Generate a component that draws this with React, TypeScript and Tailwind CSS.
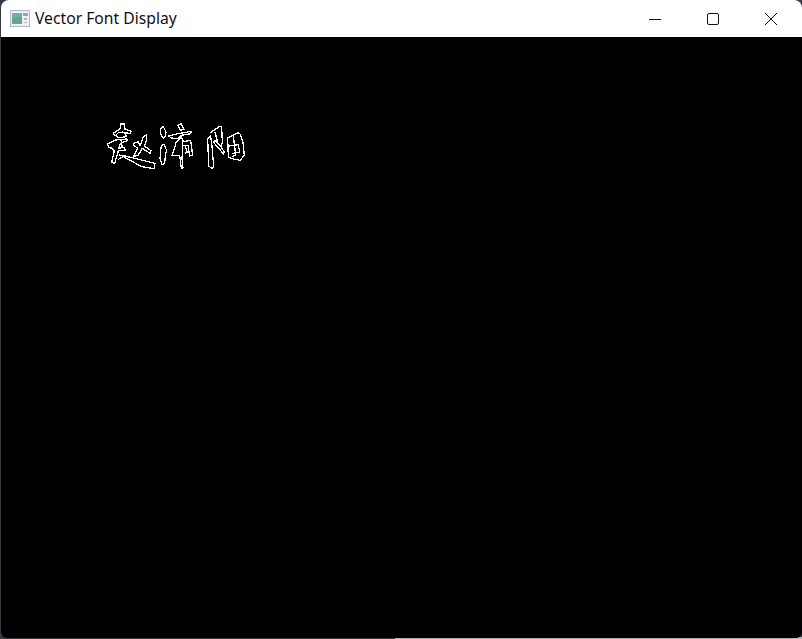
import React from "react";

const g1 = [
  "M46 26 L48 12 L58 12 L60 28 L78 34 L76 41 L60 38 L65 50 L42 53 L30 46 L25 40 L46 26",
  "M32 46 L40 38 L54 36 L60 40",
  "M8 72 L30 60 L65 57 L68 62 L46 70 L41 85 L58 82 L60 90 L40 93 L29 130 L20 128 L28 92 L22 85 L10 82 Z",
  "M48 60 L52 84",
  "M42 105 L60 108 L150 130 L148 146 L110 140 L55 110 L40 118",
  "M85 70 L100 65 L105 78 L115 50 L125 45 L125 60 L118 78 L138 92 L135 100 L112 85 L100 105 L85 111 L98 85 L85 75 Z",
];
const g2 = [
  "M8 20 L16 14 L24 30 L22 42 L16 50 L8 35 Z",
  "M10 70 L18 68 L26 85 L22 100 L20 125 L12 128 L6 110 L8 85 Z",
  "M60 10 L70 5 L78 22 L68 25 Z",
  "M32 42 L60 35 L100 28 L98 35 L70 40 L58 50 L40 48 Z",
  "M42 100 L55 60 L70 45 L75 55 L72 110 L75 138 L70 140 L65 100 Z",
  "M72 60 L98 55 L104 100 L95 102 L90 70 L75 70",
  "M82 72 L88 90 L80 95",
];
const g3 = [
  "M8 50 L16 42 L20 60 L26 135 L22 140 L11 132 Z",
  "M15 33 L45 12 L50 15 L52 60 L48 75 L30 55 L25 60 L55 95 L58 90 L48 75",
  "M30 30 L38 62",
  "M68 48 L100 32 L105 36 L114 60 L118 100 L105 115 L80 110 L70 105 Z",
  "M85 42 L92 98 L82 105",
  "M72 72 L100 68 L104 90 L80 95",
];

export default function App() {
  return (
    <div className="relative w-[802px] h-[639px] bg-[#3a3a44] overflow-hidden" style={{ fontFamily: "'Noto Sans', 'Open Sans', sans-serif" }}>
      <div className="absolute left-[395px] right-0 bottom-0 h-[2px] bg-[#b0b0b0]" />
      <div className="absolute inset-0 flex flex-col ml-[1px] mb-[1px] rounded-t-lg rounded-b-md overflow-hidden">
        <header className="h-[37px] shrink-0 bg-white flex items-center">
          <svg width="20" height="17" viewBox="0 0 20 17" className="ml-[9px] shrink-0">
            <rect x="0.5" y="0.5" width="19" height="16" fill="#eef0f2" stroke="#b4babd" />
            <rect x="2" y="3" width="10" height="11" fill="#62a890" />
            <rect x="2" y="3" width="10" height="4" fill="#7ea6bd" />
            <rect x="13" y="3" width="5" height="3" fill="#9aa5a8" />
            <rect x="14" y="8" width="3" height="2" fill="#a8c0b0" />
            <rect x="14" y="12" width="3" height="1" fill="#b4bcb8" />
          </svg>
          <span className="ml-[5px] text-[15.7px] leading-none text-[#111] whitespace-nowrap">Vector Font Display</span>
          <div className="ml-auto flex items-center h-full">
            <button className="w-[58px] h-full flex items-center justify-center">
              <svg width="12" height="12" viewBox="0 0 12 12"><path d="M0 6.5H12" stroke="#111" strokeWidth="1" /></svg>
            </button>
            <button className="w-[58px] h-full flex items-center justify-center">
              <svg width="12" height="12" viewBox="0 0 12 12"><rect x="0.5" y="0.5" width="11" height="11" rx="1.5" fill="none" stroke="#111" strokeWidth="1" /></svg>
            </button>
            <button className="w-[58px] h-full flex items-center justify-center mr-[2px]">
              <svg width="14" height="14" viewBox="0 0 14 14"><path d="M1 1L13 13M13 1L1 13" stroke="#111" strokeWidth="1" /></svg>
            </button>
          </div>
        </header>
        <main className="relative flex-1 bg-black">
          <svg className="absolute left-[104px] top-[83px]" width="52" height="50" viewBox="0 0 156 150" fill="none" stroke="#fff" strokeWidth="3.8" shapeRendering="crispEdges">
            {g1.map((d) => <path key={d} d={d} />)}
          </svg>
          <svg className="absolute left-[157px] top-[85px]" width="44" height="50" viewBox="0 0 132 150" fill="none" stroke="#fff" strokeWidth="3.8" shapeRendering="crispEdges">
            {g2.map((d) => <path key={d} d={d} />)}
          </svg>
          <svg className="absolute left-[204px] top-[85px]" width="44" height="50" viewBox="0 0 132 150" fill="none" stroke="#fff" strokeWidth="3.8" shapeRendering="crispEdges">
            {g3.map((d) => <path key={d} d={d} />)}
          </svg>
        </main>
      </div>
    </div>
  );
}
